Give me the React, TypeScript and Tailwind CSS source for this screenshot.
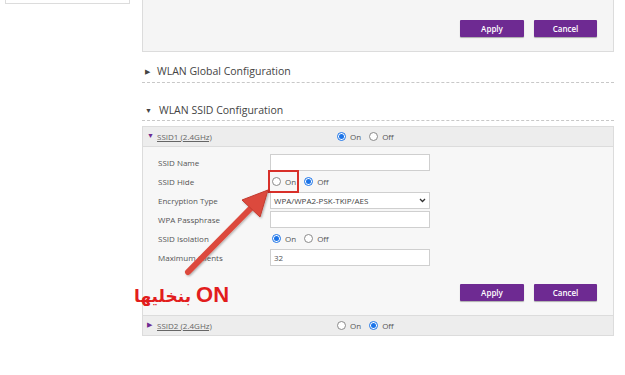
import React from "react";

const font = { fontFamily: '"Open Sans", "Noto Sans", sans-serif' };

function Radio({ checked }: { checked?: boolean }) {
  return checked ? (
    <span className="inline-flex h-[9px] w-[9px] items-center justify-center rounded-full border border-[#1a73e8] bg-white">
      <span className="h-[5px] w-[5px] rounded-full bg-[#1a73e8]" />
    </span>
  ) : (
    <span className="inline-block h-[9px] w-[9px] rounded-full border border-[#8a8a8a] bg-white" />
  );
}

function RadioPair({ on }: { on: boolean }) {
  return (
    <div className="flex items-center text-[8px] text-[#555]">
      <Radio checked={on} />
      <span className="ml-[4px] mr-[8px]">On</span>
      <Radio checked={!on} />
      <span className="ml-[4px]">Off</span>
    </div>
  );
}

function Buttons() {
  return (
    <div className="flex justify-end gap-[10px] pr-[16px]">
      <div className="flex h-[17px] w-[64px] items-center justify-center rounded-[1px] bg-[#6e2a92] text-[8px] font-semibold text-white shadow-[0_1px_1px_rgba(0,0,0,0.3)]">
        Apply
      </div>
      <div className="flex h-[17px] w-[63px] items-center justify-center rounded-[1px] bg-[#6e2a92] text-[8px] font-semibold text-white shadow-[0_1px_1px_rgba(0,0,0,0.3)]">
        Cancel
      </div>
    </div>
  );
}

function Row({ label, children }: { label: string; children: React.ReactNode }) {
  return (
    <div className="flex h-[19px] items-center">
      <div className="w-[112px] text-[8px] text-[#555]">{label}</div>
      {children}
    </div>
  );
}

function Input({ value }: { value?: string }) {
  return (
    <div className="flex h-[17px] w-[160px] items-center border border-[#cfcfcf] bg-white px-[3px] text-[8px] text-[#555]">
      {value}
    </div>
  );
}

export default function App() {
  return (
    <div className="relative h-[375px] w-[625px] overflow-hidden bg-white" style={font}>
      <div className="flex">
        <div className="w-[142px] shrink-0">
          <div className="ml-[5px] h-[4px] w-[125px] border-x border-b border-[#dcdcdc]" />
        </div>
        <div className="w-[472px] shrink-0">
          <div className="flex h-[52px] flex-col justify-end border-x border-b border-[#dcdcdc] bg-[#f5f5f5] pb-[14px]">
            <Buttons />
          </div>
          <div className="flex h-[31px] items-end border-b border-dashed border-[#c8c8c8] pb-[3px] pl-[3px] text-[10.5px] text-[#444]">
            <span className="mr-[7px] text-[7px] leading-[15px]">▶</span>
            <span className="leading-[15px]">WLAN Global Configuration</span>
          </div>
          <div className="flex h-[38px] items-end border-b border-dashed border-[#c8c8c8] pb-[2px] pl-[3px] text-[10.5px] text-[#444]">
            <span className="mr-[7px] text-[7px] leading-[15px]">▼</span>
            <span className="leading-[15px]">WLAN SSID Configuration</span>
          </div>
          <div className="mt-[5px] border border-[#dcdcdc]">
            <div className="flex h-[20px] items-center border-b border-[#dcdcdc] bg-[#ededed] pl-[4px]">
              <span className="w-[10px] text-[7px] text-[#6e2a92]">▼</span>
              <span className="w-[180px] text-[8px] text-[#666] underline">SSID1 (2.4GHz)</span>
              <RadioPair on={true} />
            </div>
            <div className="bg-[#f7f7f7] pb-[14px] pl-[15px] pt-[6px]">
              <Row label="SSID Name">
                <Input />
              </Row>
              <Row label="SSID Hide">
                <div className="pl-[2px]">
                  <RadioPair on={false} />
                </div>
              </Row>
              <Row label="Encryption Type">
                <div className="flex h-[17px] w-[160px] items-center justify-between border border-[#cfcfcf] bg-white px-[3px] text-[8px] text-[#444]">
                  <span>WPA/WPA2-PSK-TKIP/AES</span>
                  <svg width="7" height="5" viewBox="0 0 7 5">
                    <path d="M1 1 L3.5 3.5 L6 1" fill="none" stroke="#333" strokeWidth="1.3" />
                  </svg>
                </div>
              </Row>
              <Row label="WPA Passphrase">
                <Input />
              </Row>
              <Row label="SSID Isolation">
                <div className="pl-[2px]">
                  <RadioPair on={true} />
                </div>
              </Row>
              <Row label="Maximum Clients">
                <Input value="32" />
              </Row>
              <div className="mt-[17px]">
                <Buttons />
              </div>
            </div>
            <div className="flex h-[20px] items-center border-t border-[#dcdcdc] bg-[#ededed] pl-[4px]">
              <span className="w-[10px] text-[7px] text-[#6e2a92]">▶</span>
              <span className="w-[180px] text-[8px] text-[#666] underline">SSID2 (2.4GHz)</span>
              <RadioPair on={false} />
            </div>
          </div>
        </div>
      </div>

      {/* annotation overlay */}
      <div className="absolute left-[268px] top-[170px] h-[23px] w-[31px] border-2 border-[#d8302a]" />
      <svg className="pointer-events-none absolute left-0 top-0" width="625" height="375">
        <defs>
          <filter id="sh" x="-20%" y="-20%" width="140%" height="140%">
            <feDropShadow dx="1" dy="1" stdDeviation="1" floodColor="#000" floodOpacity="0.3" />
          </filter>
        </defs>
        <g filter="url(#sh)">
          <line x1="188" y1="272" x2="252" y2="207" stroke="#dc4a3d" strokeWidth="6" strokeLinecap="round" />
          <polygon points="268,190 260,217 242,200" fill="#dc4a3d" stroke="#c23a2f" strokeWidth="1" strokeLinejoin="round" />
        </g>
      </svg>
      <div
        className="absolute left-[134px] top-[282px] flex items-baseline gap-[5px] font-bold leading-[26px] text-[#e21d1d]"
        style={{ fontFamily: '"Liberation Sans", "DejaVu Sans", sans-serif' }}
      >
        <span className="text-[17px]" style={{ fontFamily: '"DejaVu Sans", sans-serif' }}>بنخليها</span>
        <span className="text-[22px]">ON</span>
      </div>
    </div>
  );
}
